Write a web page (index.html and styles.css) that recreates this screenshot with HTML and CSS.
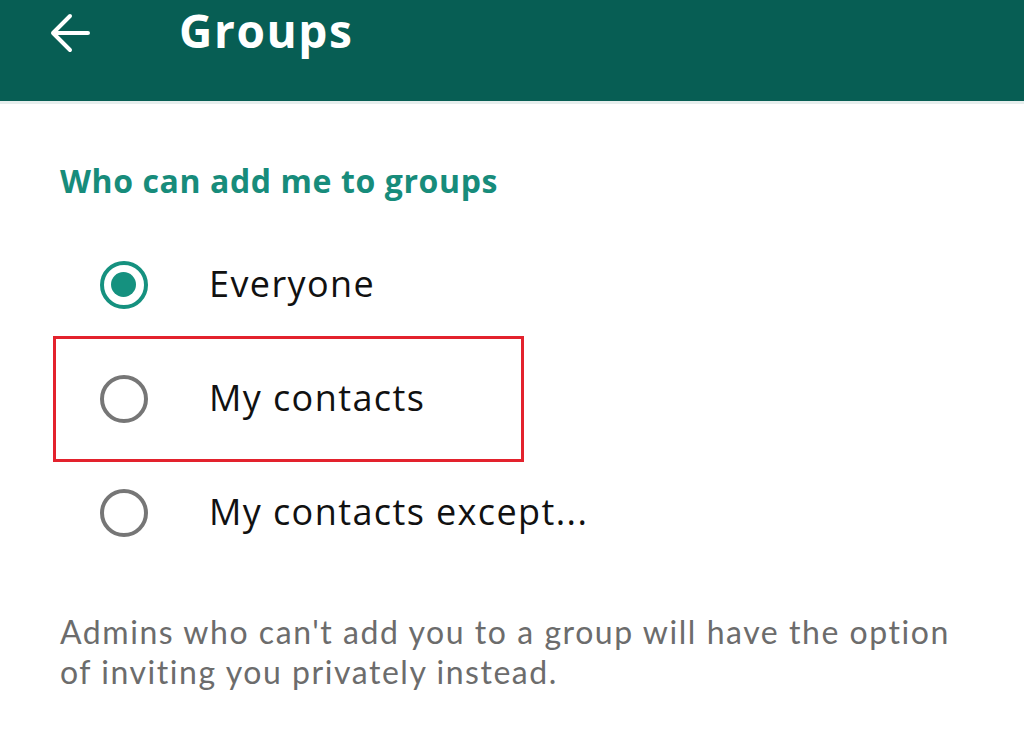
FILE: index.html
```html
<!DOCTYPE html>
<html>
<head>
<meta charset="utf-8">
<link rel="stylesheet" href="styles.css">
</head>
<body>
<header class="appbar">
  <svg class="back" width="40" height="40" viewBox="0 0 40 40"><path d="M38 20H3M20 3L3 20l17 17" fill="none" stroke="#fff" stroke-width="4" stroke-linecap="round" stroke-linejoin="round"/></svg>
  <h1 class="title">Groups</h1>
</header>
<main class="content">
  <h2 class="section">Who can add me to groups</h2>
  <ul class="options">
    <li class="option"><span class="radio checked"></span><span class="label">Everyone</span></li>
    <li class="option highlighted"><span class="radio"></span><span class="label">My contacts</span></li>
    <li class="option"><span class="radio"></span><span class="label">My contacts except...</span></li>
  </ul>
  <p class="note">Admins who can't add you to a group will have the option of inviting you privately instead.</p>
</main>
</body>
</html>
```
FILE: styles.css
```css
* { box-sizing: border-box; }
html, body { margin: 0; padding: 0; background: #fff; }
body { width: 1024px; height: 755px; overflow: hidden; font-family: "Open Sans", "Noto Sans", sans-serif; }
.appbar {
  height: 104px;
  background: #075e54;
  display: flex;
  align-items: flex-start;
  padding: 0 0 0 50px;
  border-bottom: 3px solid #e6eeed;
}
.back { display: block; margin-top: 13px; flex: none; }
.title {
  margin: 0 0 0 89px;
  color: #fff;
  font-family: "Open Sans", sans-serif;
  font-weight: 700;
  font-size: 46px;
  line-height: 60px;
  letter-spacing: 1.6px;
}
.content { padding-top: 57px; }
.section {
  margin: 0 0 0 60px;
  color: #178c7b;
  font-family: "Open Sans", sans-serif;
  font-weight: 700;
  font-size: 32px;
  line-height: 40px;
  letter-spacing: 0.6px;
}
.options { list-style: none; margin: 27px 0 0 0; padding: 0; }
.option {
  display: flex;
  align-items: center;
  height: 114px;
  margin-left: 59px;
  width: 459px;
  padding-left: 41px;
}
.option.highlighted { outline: 3px solid #e3222d; outline-offset: 3px; }
.radio {
  width: 48px; height: 48px;
  border-radius: 50%;
  border: 4.5px solid #767676;
  flex: none;
  position: relative;
}
.radio.checked { border-color: #15917f; }
.radio.checked::after {
  content: "";
  position: absolute;
  left: 7px; top: 7px;
  width: 25px; height: 25px;
  border-radius: 50%;
  background: #15917f;
}
.label {
  margin-left: 61px;
  margin-bottom: 4px;
  font-size: 36px;
  letter-spacing: 1.4px;
  color: #111;
  white-space: nowrap;
}
.note {
  margin: 42px 0 0 60px;
  width: 915px;
  color: #6c6c6c;
  font-size: 32px;
  line-height: 40px;
  letter-spacing: 1.55px;
  font-family: "Lato", sans-serif;
}
```
